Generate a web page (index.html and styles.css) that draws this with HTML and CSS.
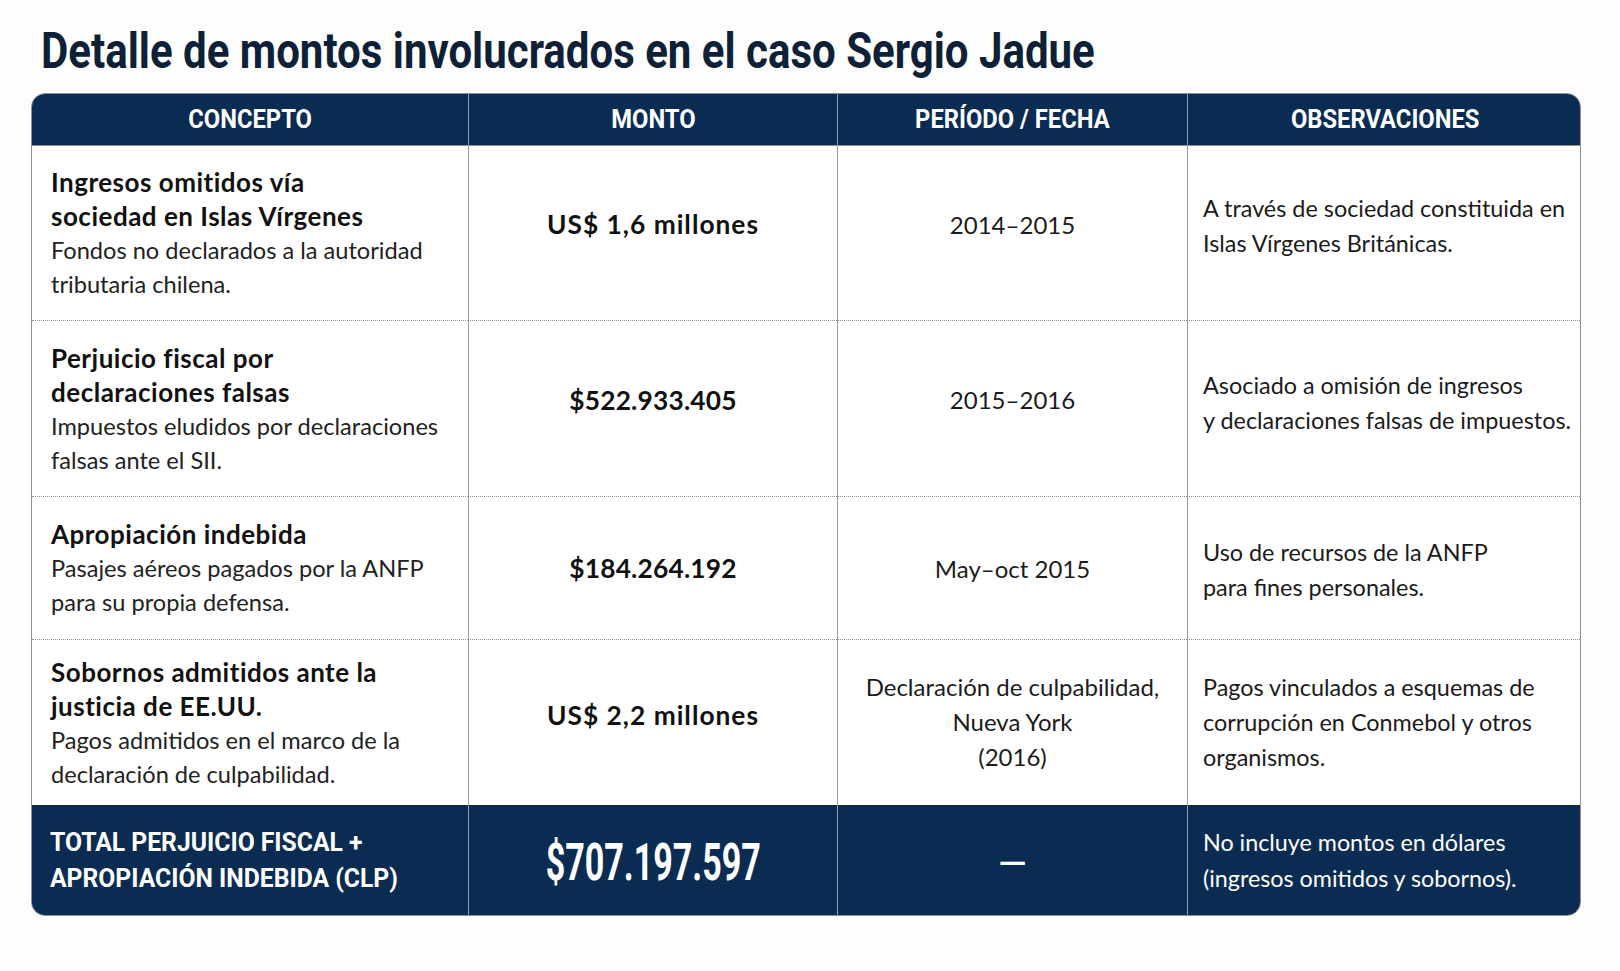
FILE: index.html
```html
<!DOCTYPE html>
<html lang="es">
<head>
<meta charset="utf-8">
<title>Detalle de montos involucrados en el caso Sergio Jadue</title>
<link rel="stylesheet" href="styles.css">
</head>
<body>
<main class="page">
  <h1 class="title"><span class="narrow">Detalle de montos involucrados en el caso Sergio Jadue</span></h1>
  <div class="table">
    <div class="th"><span class="narrow">CONCEPTO</span></div>
    <div class="th"><span class="narrow">MONTO</span></div>
    <div class="th"><span class="narrow">PERÍODO / FECHA</span></div>
    <div class="th"><span class="narrow">OBSERVACIONES</span></div>

    <div class="td concept row"><strong>Ingresos omitidos vía<br>sociedad en Islas Vírgenes</strong><span>Fondos no declarados a la autoridad<br>tributaria chilena.</span></div>
    <div class="td amount usd row r1">US$ 1,6 millones</div>
    <div class="td period row r1">2014–2015</div>
    <div class="td obs row r1">A través de sociedad constituida en<br>Islas Vírgenes Británicas.</div>

    <div class="td concept row"><strong>Perjuicio fiscal por<br>declaraciones falsas</strong><span>Impuestos eludidos por declaraciones<br>falsas ante el SII.</span></div>
    <div class="td amount row r2">$522.933.405</div>
    <div class="td period row r2">2015–2016</div>
    <div class="td obs row r2">Asociado a omisión de ingresos<br>y declaraciones falsas de impuestos.</div>

    <div class="td concept row"><strong>Apropiación indebida</strong><span>Pasajes aéreos pagados por la ANFP<br>para su propia defensa.</span></div>
    <div class="td amount row r3">$184.264.192</div>
    <div class="td period row r3">May–oct 2015</div>
    <div class="td obs row r3">Uso de recursos de la ANFP<br>para fines personales.</div>

    <div class="td concept"><strong>Sobornos admitidos ante la<br>justicia de EE.UU.</strong><span>Pagos admitidos en el marco de la<br>declaración de culpabilidad.</span></div>
    <div class="td amount usd r4">US$ 2,2 millones</div>
    <div class="td period r4">Declaración de culpabilidad,<br>Nueva York<br>(2016)</div>
    <div class="td obs r4">Pagos vinculados a esquemas de<br>corrupción en Conmebol y otros<br>organismos.</div>

    <div class="tt total-label"><span class="narrow">TOTAL PERJUICIO FISCAL +<br>APROPIACIÓN INDEBIDA (CLP)</span></div>
    <div class="tt total-amount"><span class="narrow">$707.197.597</span></div>
    <div class="tt total-dash">—</div>
    <div class="tt total-obs">No incluye montos en dólares<br>(ingresos omitidos y sobornos).</div>
  </div>
</main>
</body>
</html>
```

FILE: styles.css
```css
html, body {
  margin: 0;
  padding: 0;
  background: #fdfdfd;
}

.page {
  padding: 21px 39px 0 31px;
}

.narrow {
  display: inline-block;
  font-family: Roboto, "DejaVu Sans Condensed", sans-serif;
  font-weight: 700;
}

.title {
  margin: 0 0 12px 10px;
  font-size: 50px;
  line-height: 60px;
  color: #0e1f38;
  font-weight: 700;
}

.title .narrow {
  transform: scaleX(0.84);
  transform-origin: left center;
  white-space: nowrap;
}

.table {
  display: grid;
  grid-template-columns: 436px 369px 350px 395px;
  grid-template-rows: 52px 175px 176px 143px 165px 110px;
  width: 1550px;
  border: 1px solid #8d8f93;
  border-radius: 14px;
  overflow: hidden;
  box-sizing: border-box;
  background: #ffffff;
}

.th, .tt {
  background: #0b2c52;
  color: #ffffff;
  display: flex;
  align-items: center;
  box-sizing: border-box;
}

.th {
  justify-content: center;
  font-size: 25px;
  border-bottom: 1px solid #8d8f93;
}

.th .narrow {
  transform: scaleX(0.95);
  transform-origin: center;
}

.th + .th,
.td:not(.concept),
.tt + .tt {
  border-left: 1px solid #9a9ca0;
}

.th + .th,
.tt + .tt {
  border-left-color: #8e9db2;
}

.td {
  box-sizing: border-box;
  display: flex;
  font-family: Lato, "Liberation Sans", sans-serif;
  color: #1b1b1b;
}

.row {
  border-bottom: 1.5px dotted #8f9195;
}

.concept {
  flex-direction: column;
  justify-content: center;
  padding: 0 10px 0 19px;
  font-size: 23.6px;
  line-height: 34px;
}

.concept strong {
  font-weight: 700;
  font-size: 26px;
  letter-spacing: 0.5px;
  color: #111111;
}

.concept span {
  font-weight: 400;
  color: #222222;
}

.amount {
  align-items: center;
  justify-content: center;
  font-weight: 700;
  font-size: 26.3px;
  letter-spacing: 0.2px;
  color: #111111;
}

.amount.usd {
  letter-spacing: 1px;
}

.period {
  align-items: center;
  justify-content: center;
  text-align: center;
  font-size: 24px;
  line-height: 35px;
}

.obs {
  align-items: center;
  padding: 0 8px 0 15px;
  font-size: 23.4px;
  line-height: 35px;
}

.amount.r1, .period.r1 { padding-bottom: 18px; }
.obs.r1 { padding-bottom: 14px; }
.amount.r2, .period.r2 { padding-bottom: 18px; }
.obs.r2 { padding-bottom: 12px; }
.obs.r3 { padding-top: 4px; }
.amount.r4 { padding-bottom: 16px; }
.period.r4 { padding-bottom: 2px; }

.total-label {
  padding-left: 18px;
  font-size: 26px;
  line-height: 36px;
}

.total-label .narrow {
  transform: scaleX(0.95);
  transform-origin: left center;
  white-space: nowrap;
}

.total-amount {
  justify-content: center;
  font-size: 52px;
  padding-top: 4px;
}

.total-amount .narrow {
  transform: scaleX(0.655);
  transform-origin: center;
}

.total-dash {
  justify-content: center;
  font-family: Lato, "Liberation Sans", sans-serif;
  font-weight: 700;
  font-size: 36px;
}

.total-obs {
  padding-left: 15px;
  font-family: Lato, "Liberation Sans", sans-serif;
  font-size: 23.3px;
  line-height: 36px;
}
```
